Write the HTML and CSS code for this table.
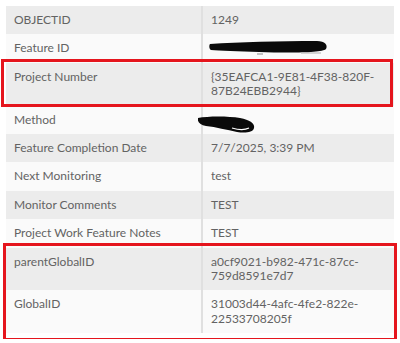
FILE: index.html
```html
<!DOCTYPE html>
<html>
<head>
<meta charset="utf-8">
<link rel="stylesheet" href="styles.css">
</head>
<body>
<div class="page">
  <table class="attrs">
    <colgroup><col class="c1"><col class="c2"></colgroup>
    <tr><th>OBJECTID</th><td>1249</td></tr>
    <tr><th>Feature ID</th><td class="redact">
      <svg class="scrib1" width="120" height="14" viewBox="0 0 120 14">
        <path d="M1,3 C30,1 70,0 108,0 C116,0 119,4 117,8 C113,12 80,12 50,11 C30,10 10,10 2,9 C0,8 0,4 1,3 Z" fill="#0a0a0a"/>
        <path d="M48,13 H54" stroke="#8a8a8a" stroke-width="1"/>
        <path d="M92,12 H112" stroke="#b0b0b0" stroke-width="1"/>
      </svg>
    </td></tr>
    <tr><th>Project Number</th><td>{35EAFCA1-9E81-4F38-820F-87B24EBB2944}</td></tr>
    <tr><th>Method</th><td class="redact">
      <svg class="scrib2" width="58" height="18" viewBox="0 0 58 18">
        <path d="M0,2 C10,0 30,0 42,2 C53,4 57,8 56,12 C55,17 46,17 39,16 C29,14 18,11 8,10 C2,9 -1,6 0,2 Z" fill="#0a0a0a"/>
        <path d="M34,12 C41,14 47,14 51,12" stroke="#ffffff" stroke-width="1.2" fill="none"/>
      </svg>
    </td></tr>
    <tr><th>Feature Completion Date</th><td>7/7/2025, 3:39 PM</td></tr>
    <tr><th>Next Monitoring</th><td>test</td></tr>
    <tr><th>Monitor Comments</th><td>TEST</td></tr>
    <tr><th>Project Work Feature Notes</th><td>TEST</td></tr>
    <tr><th>parentGlobalID</th><td>a0cf9021-b982-471c-87cc-759d8591e7d7</td></tr>
    <tr><th>GlobalID</th><td>31003d44-4afc-4fe2-822e-22533708205f</td></tr>
  </table>
  <div class="mark mark1"></div>
  <div class="mark mark2"></div>
</div>
</body>
</html>
```
FILE: styles.css
```css
html, body {
  margin: 0;
  background: #ffffff;
}
.page {
  position: relative;
  padding: 6px;
  width: 388px;
}
.attrs {
  border-collapse: collapse;
  table-layout: fixed;
  width: 388px;
  font-family: Lato, "Liberation Sans", sans-serif;
  font-size: 12px;
  line-height: 14.4px;
  color: #636363;
}
.c1 { width: 196px; }
.c2 { width: 192px; }
.attrs th {
  text-align: left;
  font-weight: normal;
  padding: 7px 8px;
  vertical-align: top;
  border-right: 2px solid #e0e0e0;
}
.attrs td {
  padding: 7px 8px;
  vertical-align: top;
}
.attrs tr:nth-child(odd) { background: #ececec; }
.attrs tr:nth-child(even) { background: #fafafa; }
.redact {
  position: relative;
  height: 14.4px;
}
.scrib1 {
  position: absolute;
  left: 6px;
  top: 7px;
}
.scrib2 {
  position: absolute;
  left: -5px;
  top: 10px;
}
.mark {
  position: absolute;
  border: 3px solid #e5151d;
  box-sizing: border-box;
}
.mark1 {
  left: 1px;
  top: 59px;
  width: 392px;
  height: 48px;
}
.mark2 {
  left: 3px;
  top: 243px;
  width: 394px;
  height: 98px;
}
```
